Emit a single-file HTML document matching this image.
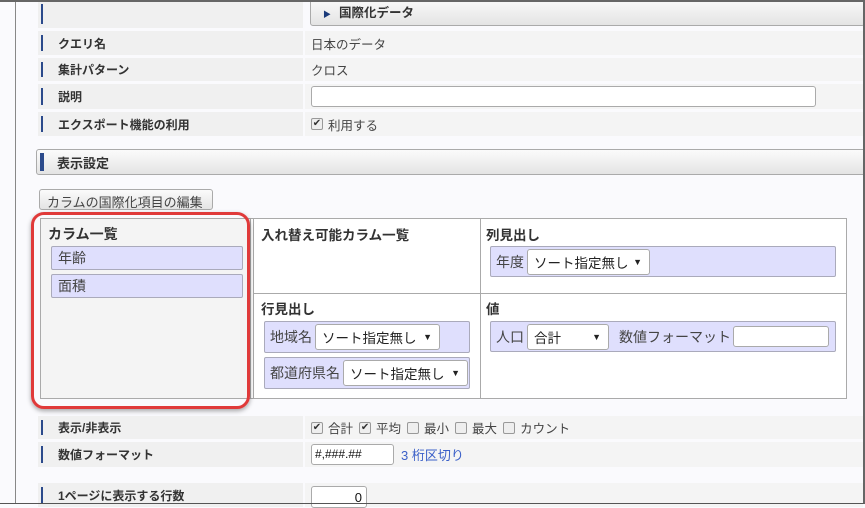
<!DOCTYPE html>
<html><head><meta charset="utf-8"><style>
*{box-sizing:border-box;margin:0;padding:0}
body{width:865px;height:504px;overflow:hidden;background:#fafafd;font-family:"Liberation Sans","Noto Sans CJK JP",sans-serif;font-size:12px;color:#333;position:relative}
.a{position:absolute}
.frame{left:0;top:0;width:865px;height:504px;border:1px solid #555;border-left:none;border-top:2px solid #666;border-right:2px solid #666;z-index:10;pointer-events:none}
.vl{left:15px;top:0;width:1px;height:504px;background:#888}
.lab{left:38px;width:265px;background:#f0f0f0;font-weight:bold;padding-left:20px;display:flex;align-items:center;font-size:12px;color:#333}
.lab:before{content:"";position:absolute;left:3px;top:4px;bottom:4px;width:2px;background:#2b4a8b}
.val{left:305px;width:558px;background:#f4f4f4;display:flex;align-items:center;padding-left:6px;font-size:12.5px;color:#444}
.grad{background:linear-gradient(#fbfbfb,#e4e4e4);border:1px solid #aaa;border-radius:3px}
.inp{background:#fff;border:1px solid #aaa;border-radius:2px}
.cb{display:inline-block;width:12px;height:12px;border:1px solid #999;border-radius:2px;background:#eee;vertical-align:-1px;margin-right:5px;font-size:10px;line-height:10px;text-align:center;color:#333}
.item{background:#dfdffd;border:1px solid #aab;border-radius:2px;display:flex;align-items:center;padding-left:6px;font-size:14px;color:#444}
.sel{background:#fff;border:1px solid #aaa;border-radius:3px;height:26px;display:flex;align-items:center;padding-left:6px;font-size:13.5px;color:#222;position:relative;margin-left:3px}
.sel:after{content:"▼";position:absolute;right:7px;font-size:9px}
.h{font-weight:bold;font-size:13px;color:#333}
</style></head><body>
<div class="a vl"></div>
<div class="a lab" style="top:0;height:28px"></div>
<div class="a val" style="top:0;height:28px;background:transparent"></div>
<div class="a grad" style="left:310px;top:-4px;width:555px;height:30px;padding:5px 0 0 12px;font-weight:bold;font-size:12.5px"><span style="font-size:8px;color:#1a3a7a;margin-right:8px">▶</span>国際化データ</div>
<div class="a lab" style="top:31px;height:24px">クエリ名</div>
<div class="a val" style="top:31px;height:24px">日本のデータ</div>
<div class="a lab" style="top:58px;height:23px">集計パターン</div>
<div class="a val" style="top:58px;height:23px">クロス</div>
<div class="a lab" style="top:84px;height:25px">説明</div>
<div class="a val" style="top:84px;height:25px"><div class="inp" style="width:505px;height:21px;border-radius:3px"></div></div>
<div class="a lab" style="top:112px;height:24px">エクスポート機能の利用</div>
<div class="a val" style="top:112px;height:24px"><span class="cb">✔</span>利用する</div>
<div class="a grad" style="left:36px;top:149px;width:835px;height:26px;font-weight:bold;font-size:13px;padding:3px 0 0 20px">表示設定<div class="a" style="left:3px;top:3px;width:4px;height:18px;background:#2b4a8b"></div></div>
<div class="a grad" style="left:39px;top:189px;width:174px;height:21px;font-size:13px;padding:2px 0 0 7px;color:#444">カラムの国際化項目の編集</div>
<div class="a" style="left:40px;top:218px;width:807px;height:181px;border:1px solid #aaa;background:#fff"></div>
<div class="a" style="left:41px;top:219px;width:210px;height:179px;background:#f4f4f4;border-right:1px solid #aaa"></div>
<div class="a" style="left:253px;top:219px;width:1px;height:179px;background:#aaa"></div>
<div class="a" style="left:480px;top:219px;width:1px;height:179px;background:#aaa"></div>
<div class="a" style="left:254px;top:293px;width:593px;height:1px;background:#aaa"></div>
<div class="a h" style="left:48px;top:224px;font-size:14px">カラム一覧</div>
<div class="a item" style="left:51px;top:246px;width:192px;height:24px">年齢</div>
<div class="a item" style="left:51px;top:274px;width:192px;height:24px">面積</div>
<div class="a h" style="left:261px;top:224px;font-size:13.5px">入れ替え可能カラム一覧</div>
<div class="a h" style="left:486px;top:224px;font-size:13.5px">列見出し</div>
<div class="a item" style="left:490px;top:246px;width:346px;height:31px;padding-left:5px">年度<div class="sel" style="width:123px">ソート指定無し</div></div>
<div class="a h" style="left:261px;top:298px;font-size:13.5px">行見出し</div>
<div class="a item" style="left:264px;top:321px;width:206px;height:32px;padding-left:5px">地域名<div class="sel" style="width:125px">ソート指定無し</div></div>
<div class="a item" style="left:264px;top:357px;width:206px;height:32px;padding-left:5px">都道府県名<div class="sel" style="width:125px">ソート指定無し</div></div>
<div class="a h" style="left:486px;top:298px;font-size:13.5px">値</div>
<div class="a item" style="left:490px;top:321px;width:346px;height:31px;padding-left:5px">人口<div class="sel" style="width:82px">合計</div><span style="margin-left:10px">数値フォーマット</span><div class="inp" style="width:96px;height:21px;margin-left:2px;border-radius:3px"></div></div>
<div class="a" style="left:31px;top:212px;width:219px;height:197px;border:3px solid #e03a3a;border-radius:13px;box-shadow:0 2px 5px rgba(0,0,0,.35)"></div>
<div class="a lab" style="top:416px;height:23px">表示/非表示</div>
<div class="a val" style="top:416px;height:23px;font-size:12.5px"><span class="cb">✔</span>合計<span class="cb" style="margin-left:6px">✔</span>平均<span class="cb" style="margin-left:6px"></span>最小<span class="cb" style="margin-left:6px"></span>最大<span class="cb" style="margin-left:6px"></span>カウント</div>
<div class="a lab" style="top:442px;height:25px">数値フォーマット</div>
<div class="a val" style="top:442px;height:25px"><div class="inp" style="width:83px;height:21px;padding:2px 3px;font-size:12px;color:#111;border-radius:3px">#,###.##</div><span style="color:#3a5fc8;margin-left:7px;font-size:13px">3 桁区切り</span></div>
<div class="a lab" style="top:483px;height:24px">1ページに表示する行数</div>
<div class="a val" style="top:483px;height:24px"><div class="inp" style="width:56px;height:22px;text-align:right;padding:3px 4px;font-size:13px;color:#111;margin-top:4px;border-radius:3px">0</div></div>
<div class="a frame"></div>
</body></html>
